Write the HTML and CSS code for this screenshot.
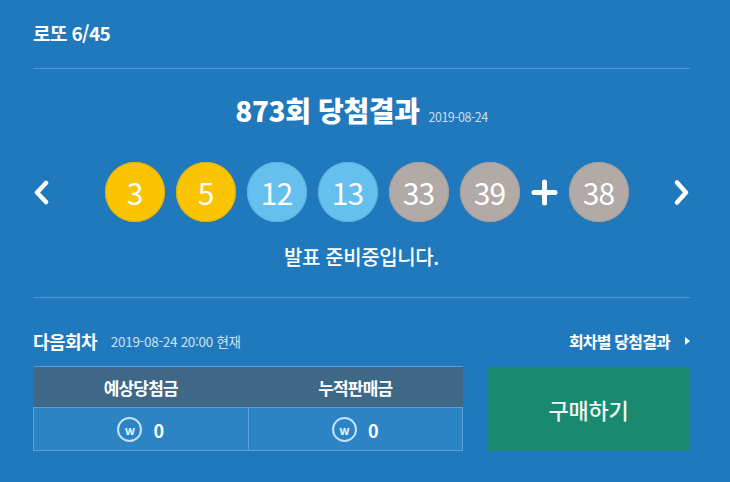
FILE: index.html
```html
<!DOCTYPE html>
<html lang="ko">
<head>
<meta charset="utf-8">
<title>로또 6/45</title>
<link rel="stylesheet" href="styles.css">
</head>
<body>
<div class="page">
  <div class="top">로또 6/45</div>
  <section class="result">
    <h1 class="title"><strong>873회 당첨결과</strong><span class="date">2019-08-24</span></h1>
    <div class="draw">
      <button class="nav" aria-label="이전">
        <svg width="17" height="25" viewBox="0 0 17 25"><polyline points="13,3 4,12.5 13,22" fill="none" stroke="#fff" stroke-width="4.5" stroke-linecap="round" stroke-linejoin="round"/></svg>
      </button>
      <div class="balls">
        <span class="ball y">3</span>
        <span class="ball y">5</span>
        <span class="ball b">12</span>
        <span class="ball b">13</span>
        <span class="ball g">33</span>
        <span class="ball g">39</span>
        <span class="plus"><svg width="27" height="27" viewBox="0 0 27 27"><path d="M13.5 3v21M3 13.5h21" stroke="#fff" stroke-width="5" stroke-linecap="round"/></svg></span>
        <span class="ball g">38</span>
      </div>
      <button class="nav" aria-label="다음">
        <svg width="17" height="27" viewBox="0 0 17 27"><polyline points="4,3.5 13,13.5 4,23.5" fill="none" stroke="#fff" stroke-width="4.5" stroke-linecap="round" stroke-linejoin="round"/></svg>
      </button>
    </div>
    <p class="notice">발표 준비중입니다.</p>
  </section>
  <section class="next">
    <div class="next-head">
      <div class="next-title"><strong>다음회차</strong><span class="next-date">2019-08-24 20:00 현재</span></div>
      <a class="link" href="#">회차별 당첨결과<span class="tri"></span></a>
    </div>
    <div class="next-body">
      <table class="prize">
        <thead><tr><th>예상당첨금</th><th>누적판매금</th></tr></thead>
        <tbody><tr>
          <td><span class="won">w</span><span class="amt">0</span></td>
          <td><span class="won">w</span><span class="amt">0</span></td>
        </tr></tbody>
      </table>
      <a class="buy" href="#">구매하기</a>
    </div>
  </section>
</div>
</body>
</html>
```
FILE: styles.css
```css
* { box-sizing: border-box; }
html, body { margin: 0; padding: 0; }
body {
  background: #2079bd;
  color: #fff;
  font-family: "Noto Sans CJK KR", "Noto Sans", sans-serif;
  width: 730px;
  height: 482px;
  overflow: hidden;
}
.page { padding: 0 40px 0 33px; }
.top {
  height: 69px;
  padding-top: 19px;
  font-size: 19px;
  font-weight: 700;
  line-height: 27px;
  letter-spacing: -0.6px;
  border-bottom: 1px solid #4f97d2;
}
.result {
  height: 229px;
  padding-top: 23px;
  border-bottom: 1px solid #4f97d2;
}
.title {
  margin: 0;
  text-align: center;
  line-height: 36px;
  font-size: 28px;
  font-weight: 700;
  letter-spacing: -0.4px;
}
.title .date {
  font-size: 12.5px;
  font-weight: 400;
  color: #c9def0;
  margin-left: 9px;
  letter-spacing: -0.5px;
}
.draw {
  margin-top: 27px;
  height: 60px;
  display: flex;
  align-items: center;
  justify-content: space-between;
}
.nav {
  background: none;
  border: 0;
  padding: 0;
  width: 17px;
  height: 27px;
  display: flex;
  align-items: center;
  justify-content: center;
}
.balls {
  display: flex;
  align-items: center;
  gap: 11px;
  margin-left: 10px;
}
.ball {
  width: 60px;
  height: 60px;
  border-radius: 50%;
  display: flex;
  align-items: center;
  justify-content: center;
  font-size: 30px;
  font-weight: 400;
  color: #fff;
  line-height: 1;
  letter-spacing: -1px;
}
.ball.y { background: #fbc400; box-shadow: inset 0 0 0 1px #e0ae06; }
.ball.b { background: #65c0ee; box-shadow: inset 0 0 0 1px #5bb3e0; }
.ball.g { background: #b2aaa6; box-shadow: inset 0 0 0 1px #a59e9a; }
.plus { width: 27px; height: 27px; display: flex; }
.notice {
  margin: 22px 0 0;
  text-align: center;
  font-size: 20px;
  font-weight: 500;
  line-height: 26px;
  letter-spacing: -0.4px;
}
.next-head {
  margin-top: 32px;
  height: 22px;
  display: flex;
  align-items: center;
  justify-content: space-between;
}
.next-title { display: flex; align-items: center; }
.next-title strong {
  font-size: 18px;
  letter-spacing: -0.6px;
}
.next-date {
  font-size: 13.5px;
  color: #cde0f1;
  margin-left: 14px;
  letter-spacing: -0.3px;
}
.link {
  color: #fff;
  text-decoration: none;
  font-size: 16px;
  font-weight: 700;
  letter-spacing: -0.8px;
  display: flex;
  align-items: center;
}
.tri {
  width: 0;
  height: 0;
  margin-left: 15px;
  border-left: 5px solid #fff;
  border-top: 4px solid transparent;
  border-bottom: 4px solid transparent;
}
.next-body {
  margin-top: 14px;
  display: flex;
  gap: 24px;
}
.prize {
  width: 430px;
  border-collapse: collapse;
  table-layout: fixed;
}
.prize th {
  height: 41px;
  background: #3e6886;
  border-top: 1px solid #5a9dd3;
  font-size: 17px;
  font-weight: 700;
  letter-spacing: -0.8px;
}
.prize td {
  height: 43px;
  background: #2d84c5;
  border: 1px solid #5aa0d8;
  text-align: center;
  vertical-align: middle;
}
.won {
  display: inline-flex;
  align-items: center;
  justify-content: center;
  width: 25px;
  height: 25px;
  border: 2px solid #c3e4fa;
  border-radius: 50%;
  font-size: 12px;
  font-weight: 700;
  line-height: 1;
  vertical-align: middle;
  color: #e6f4fd;
}
.amt {
  display: inline-block;
  margin-left: 11px;
  font-size: 18px;
  font-weight: 700;
  vertical-align: middle;
}
.buy {
  width: 203px;
  height: 84px;
  margin-top: 1px;
  background: #198a70;
  color: #eef7f3;
  text-decoration: none;
  display: flex;
  align-items: center;
  justify-content: center;
  font-size: 22px;
  font-weight: 500;
  letter-spacing: -0.3px;
}
```
